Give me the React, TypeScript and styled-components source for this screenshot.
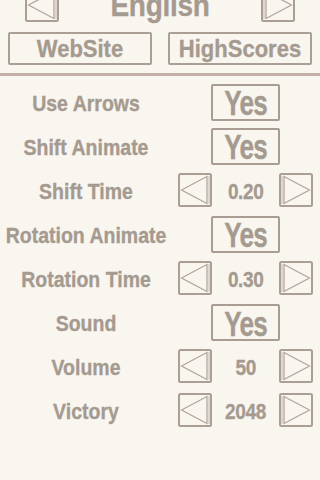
import React from "react";
import styled, { createGlobalStyle } from "styled-components";

const GlobalStyle = createGlobalStyle`
  html, body {
    margin: 0;
    padding: 0;
    background: #f9f5ef;
  }
  body {
    width: 320px;
    height: 480px;
    overflow: hidden;
    font-family: "Liberation Sans", Arial, sans-serif;
    font-weight: bold;
    color: #a59a90;
    -webkit-text-stroke: 0.3px #a59a90;
  }
`;

const settings = [
  { label: "Use Arrows", kind: "toggle", value: "Yes" },
  { label: "Shift Animate", kind: "toggle", value: "Yes" },
  { label: "Shift Time", kind: "stepper", value: "0.20" },
  { label: "Rotation Animate", kind: "toggle", value: "Yes" },
  { label: "Rotation Time", kind: "stepper", value: "0.30" },
  { label: "Sound", kind: "toggle", value: "Yes" },
  { label: "Volume", kind: "stepper", value: "50" },
  { label: "Victory", kind: "stepper", value: "2048" },
];

const ArrowBox = ({ dir }: { dir: "left" | "right" }) => (
  <ArrowSvg width="34" height="34" viewBox="0 0 34 34">
    <rect x="1" y="1" width="32" height="32" rx="1.5" fill="none" stroke="#aa9e95" strokeWidth="2" />
    {dir === "left" ? (
      <>
        <polygon points="3.5,17 29,3.5 29,30.5" fill="none" stroke="#b2a69d" strokeWidth="1.3" />
        <line x1="31" y1="3" x2="31" y2="31" stroke="#c4b9b0" strokeWidth="1" />
      </>
    ) : (
      <>
        <polygon points="30.5,17 5,3.5 5,30.5" fill="none" stroke="#b2a69d" strokeWidth="1.3" />
        <line x1="3" y1="3" x2="3" y2="31" stroke="#c4b9b0" strokeWidth="1" />
      </>
    )}
  </ArrowSvg>
);

export default function App() {
  return (
    <>
      <GlobalStyle />
      <Page>
        <LangRow>
          <ArrowBox dir="left" />
          <LangName>
            <Stretch $sx={1} $sy={1.12}>English</Stretch>
          </LangName>
          <ArrowBox dir="right" />
        </LangRow>
        <LinkRow>
          <LinkButton>
            <Stretch $sx={1} $sy={1.12}>WebSite</Stretch>
          </LinkButton>
          <LinkButton>
            <Stretch $sx={1} $sy={1.12}>HighScores</Stretch>
          </LinkButton>
        </LinkRow>
        <Divider />
        <SettingsList>
          {settings.map((s) => (
            <SettingRow key={s.label}>
              <Label>
                <Stretch $sx={1} $sy={1.12}>{s.label}</Stretch>
              </Label>
              <Control>
                {s.kind === "toggle" ? (
                  <Toggle>
                    <Stretch $sx={0.87} $sy={1.15}>{s.value}</Stretch>
                  </Toggle>
                ) : (
                  <>
                    <ArrowBox dir="left" />
                    <Value>
                      <Stretch $sx={0.95} $sy={1.12}>{s.value}</Stretch>
                    </Value>
                    <ArrowBox dir="right" />
                  </>
                )}
              </Control>
            </SettingRow>
          ))}
        </SettingsList>
      </Page>
    </>
  );
}

const Page = styled.div`
  display: flex;
  flex-direction: column;
  width: 320px;
`;

const Stretch = styled.span<{ $sx: number; $sy: number }>`
  display: inline-block;
  white-space: nowrap;
  transform: scale(${(p) => p.$sx}, ${(p) => p.$sy});
`;

const ArrowSvg = styled.svg`
  display: block;
  flex: none;
`;

const LangRow = styled.div`
  display: flex;
  align-items: center;
  justify-content: space-between;
  height: 34px;
  margin-top: -12px;
  padding: 0 25px 0 25px;
`;

const LangName = styled.div`
  font-size: 28px;
  line-height: 34px;
  padding-top: 2px;
  letter-spacing: -0.3px;
`;

const LinkRow = styled.div`
  display: flex;
  gap: 16px;
  padding: 0 8px;
  margin-top: 10px;
`;

const LinkButton = styled.div`
  flex: 1;
  height: 33px;
  box-sizing: border-box;
  border: 2px solid #aa9e95;
  border-radius: 2px;
  display: flex;
  align-items: center;
  justify-content: center;
  font-size: 22px;
  padding-top: 1px;
`;

const Divider = styled.div`
  height: 3px;
  margin-top: 8px;
  background: #c3b0a8;
`;

const SettingsList = styled.div`
  display: flex;
  flex-direction: column;
  padding-top: 4px;
`;

const SettingRow = styled.div`
  display: grid;
  grid-template-columns: 172px 135px;
  column-gap: 6px;
  align-items: center;
  height: 44px;
`;

const Label = styled.div`
  text-align: center;
  font-size: 19.5px;
  padding-top: 3px;
`;

const Control = styled.div`
  display: flex;
  align-items: center;
  justify-content: center;
`;

const Toggle = styled.div`
  width: 69px;
  height: 37px;
  box-sizing: border-box;
  border: 2px solid #a89c93;
  border-radius: 2px;
  display: flex;
  align-items: center;
  justify-content: center;
  font-size: 30px;
  letter-spacing: -0.8px;
  padding-top: 3px;
`;

const Value = styled.div`
  flex: 1;
  text-align: center;
  font-size: 20px;
  letter-spacing: -0.4px;
  padding-top: 2px;
`;
